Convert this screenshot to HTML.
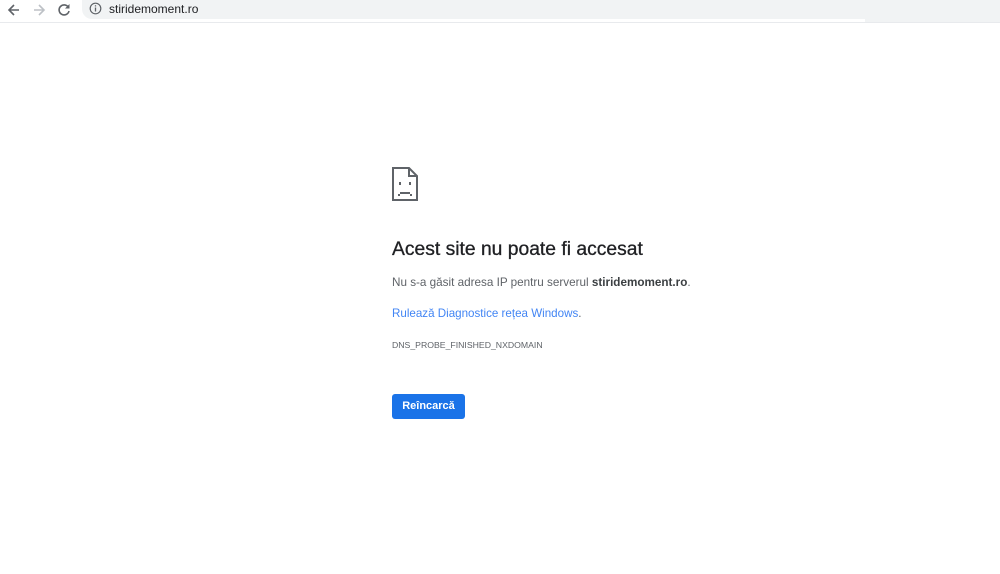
<!DOCTYPE html>
<html><head><meta charset="utf-8"><style>
body{margin:0;width:1000px;height:574px;background:#fff;position:relative;overflow:hidden;font-family:"Liberation Sans",Arial,sans-serif}
.addr{position:absolute;left:82px;top:0;width:918px;height:19px;background:#f1f3f4;border-radius:0 0 0 10px}
.addr2{position:absolute;left:865px;top:19px;width:135px;height:3px;background:#f1f3f4}
.line{position:absolute;left:0;top:22px;width:1000px;height:1px;background:#e8eaed}
.url{position:absolute;left:109px;top:2px;font-size:12px;color:#202124}
.t{position:absolute;left:392px;color:#202124;white-space:nowrap}
</style></head><body>
<div class="addr"></div><div class="addr2"></div><div class="line"></div>
<svg style="position:absolute;left:6px;top:2px" width="16" height="16" viewBox="0 0 16 16"><path d="M13 8H3M8 3L3 8l5 5" stroke="#5f6368" stroke-width="1.6" fill="none"/></svg>
<svg style="position:absolute;left:31px;top:2px" width="16" height="16" viewBox="0 0 16 16"><path d="M3 8h10M8 3l5 5-5 5" stroke="#bdc1c6" stroke-width="1.6" fill="none"/></svg>
<svg style="position:absolute;left:56px;top:2px" width="16" height="16" viewBox="0 0 16 16"><path d="M12.5 5.5A5 5 0 1 0 13 9" stroke="#5f6368" stroke-width="1.6" fill="none"/><path d="M13.5 2v4.5H9z" fill="#5f6368"/></svg>
<svg style="position:absolute;left:89px;top:2px" width="13" height="13" viewBox="0 0 13 13"><circle cx="6.5" cy="6.5" r="5.3" stroke="#5f6368" stroke-width="1.2" fill="none"/><path d="M6.5 5.5v4M6.5 3.3v1.2" stroke="#5f6368" stroke-width="1.3"/></svg>
<div class="url">stiridemoment.ro</div>
<svg style="position:absolute;left:392px;top:167px" width="26" height="34" viewBox="0 0 26 34"><path d="M1 1h16l8 8v24H1z" fill="none" stroke="#5f6368" stroke-width="2"/><path d="M17 1v8h8" fill="none" stroke="#5f6368" stroke-width="2"/><rect x="7" y="15" width="2" height="3" fill="#5f6368"/><rect x="17" y="15" width="2" height="3" fill="#5f6368"/><path d="M8 26h10" stroke="#5f6368" stroke-width="2"/><rect x="6" y="27" width="2" height="2" fill="#5f6368"/><rect x="18" y="27" width="2" height="2" fill="#5f6368"/></svg>
<div class="t" style="top:239px;font-size:19.3px;-webkit-text-stroke:0.3px #202124">Acest site nu poate fi accesat</div>
<div class="t" style="top:276px;font-size:11.7px;color:#5f6368">Nu s-a găsit adresa IP pentru serverul <b style="color:#3c4043">stiridemoment.ro</b>.</div>
<div class="t" style="top:307px;font-size:11.6px;color:#5f6368"><span style="color:#4285f4">Rulează Diagnostice rețea Windows</span>.</div>
<div class="t" style="top:340px;font-size:8.7px;color:#5f6368">DNS_PROBE_FINISHED_NXDOMAIN</div>
<div style="position:absolute;left:392px;top:394px;width:73px;height:25px;background:#1a73e8;border-radius:3px;color:#fff;font-size:11px;font-weight:bold;line-height:25px;text-align:center">Reîncarcă</div>
</body></html>
